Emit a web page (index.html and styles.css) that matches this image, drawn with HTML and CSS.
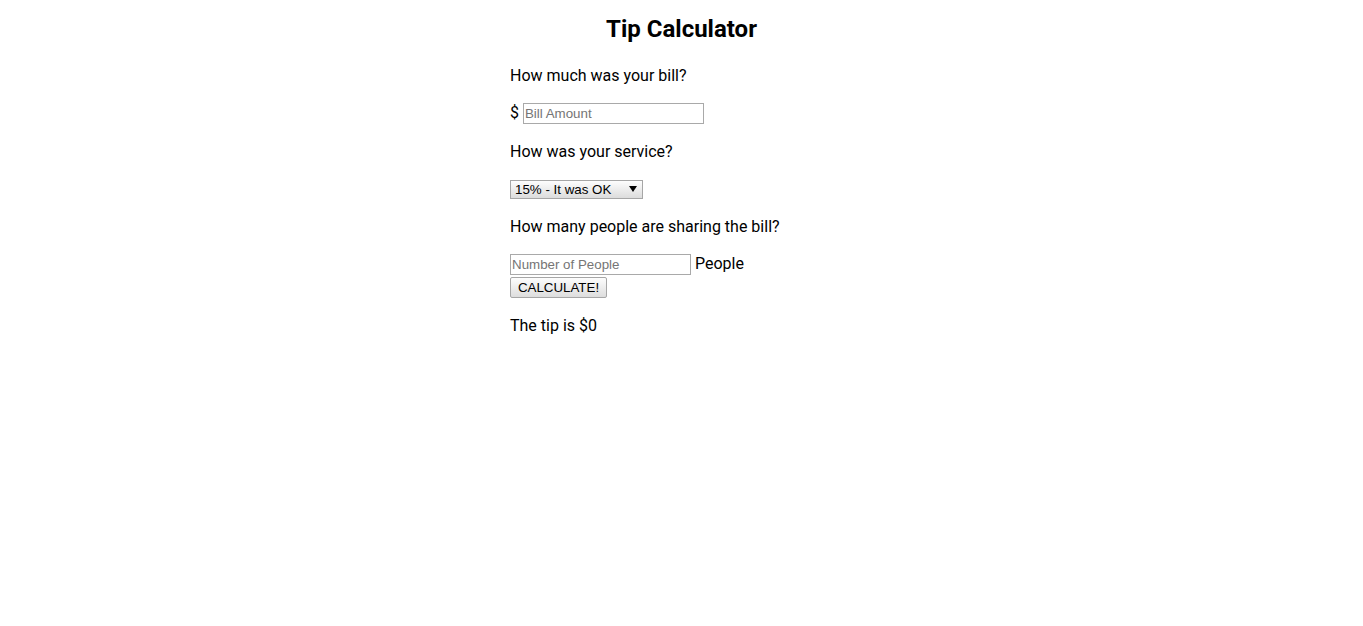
FILE: index.html
```html
<!DOCTYPE html>
<html>
<head>
<meta charset="utf-8">
<title>Tip Calculator</title>
<link rel="stylesheet" href="styles.css">
</head>
<body>
<div class="container">
  <h1 class="title">Tip Calculator</h1>
  <p class="question first">How much was your bill?</p>
  <p class="row">$ <input class="field" type="text" placeholder="Bill Amount"></p>
  <p class="question">How was your service?</p>
  <p class="row"><select class="service"><option>15% - It was OK</option></select></p>
  <p class="question last">How many people are sharing the bill?</p>
  <div class="row tight"><input class="field" type="text" placeholder="Number of People"> People</div>
  <div class="row tight"><button class="calc">CALCULATE!</button></div>
  <p class="result">The tip is $0</p>
</div>
</body>
</html>
```
FILE: styles.css
```css
html, body { margin: 0; padding: 0; background: #fff; }
body { font-family: Roboto, "Liberation Sans", sans-serif; font-size: 16px; color: #000; }
.container { width: 343px; margin: 0 auto; padding-top: 1px; }
.title { text-align: center; font-size: 24px; font-weight: 700; margin: 14px 0 23px; line-height: 28px; }
.question, .row, .result { margin: 0 0 18px; line-height: 20px; }
.question { margin-bottom: 16px; }
.question.first { margin-bottom: 17px; }
.question.last { margin-bottom: 15px; }
.row.tight { margin: 0; line-height: 23px; }
.row.tight + .row.tight { margin-bottom: 18px; }
.field {
  font-family: Arial, "Liberation Sans", sans-serif; font-size: 13.333px;
  width: 181px; height: 21px; box-sizing: border-box;
  border: 1px solid #a9a9a9; padding: 1px 1px; margin: 0; vertical-align: middle;
}
.field::placeholder { color: #757575; }
.service {
  -webkit-appearance: none; appearance: none;
  font-family: Arial, "Liberation Sans", sans-serif; font-size: 13.333px; color: #000;
  width: 133px; height: 19px; box-sizing: border-box; padding: 0 4px;
  border: 1px solid #a6a6a6; border-radius: 0;
  background: url("data:image/svg+xml;utf8,<svg xmlns='http://www.w3.org/2000/svg' width='8' height='6'><path d='M0 0h8L4 6z' fill='black'/></svg>") no-repeat right 5px center, linear-gradient(#fdfdfd, #dcdcdc);
  vertical-align: middle; margin: 0;
}
.calc {
  font-family: Arial, "Liberation Sans", sans-serif; font-size: 13.333px; color: #000;
  width: 97px; height: 21px; box-sizing: border-box; padding: 0 6px; margin: 0;
  border: 1px solid #a6a6a6; border-radius: 2px;
  background: linear-gradient(#fdfdfd, #dddddd);
  vertical-align: middle;
}
```
